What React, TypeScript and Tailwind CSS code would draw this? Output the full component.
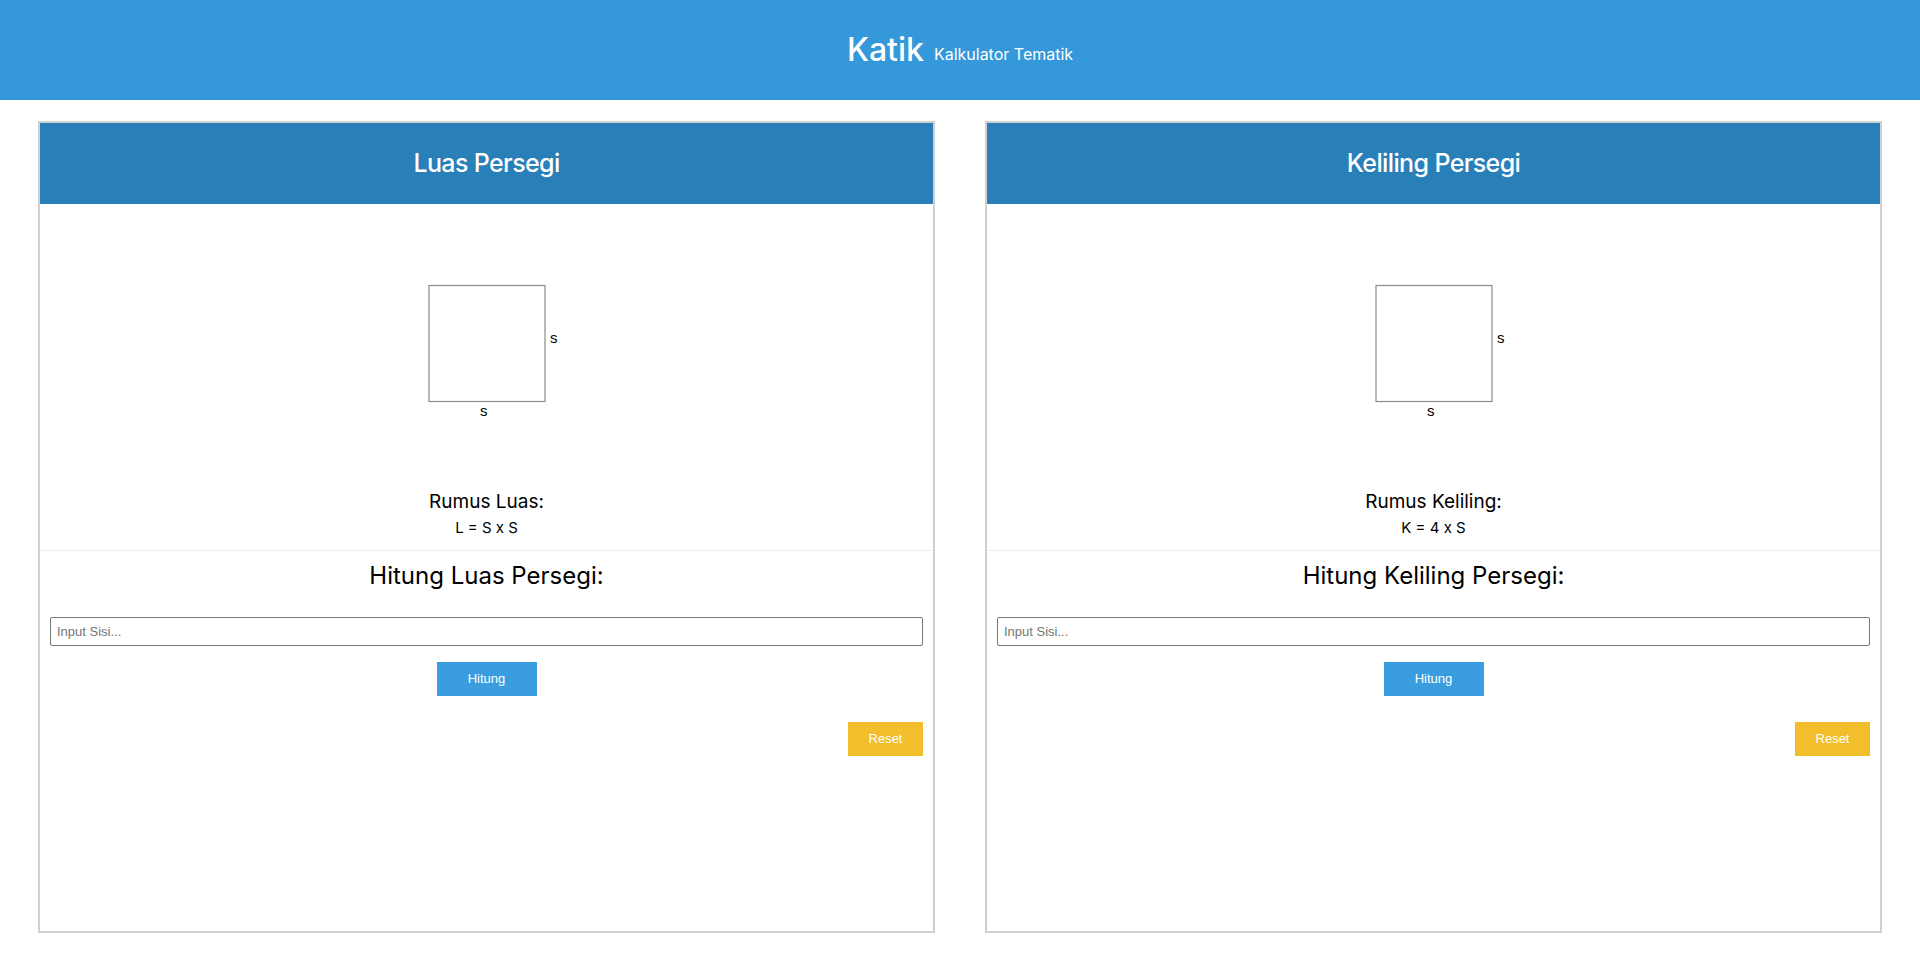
import React from "react";

type CardProps = {
  title: string;
  rumusLabel: string;
  rumus: string;
  hitungTitle: string;
};

function SquareFigure() {
  return (
    <svg width="150" height="138" viewBox="0 0 150 138" className="block overflow-visible">
      <rect x="17" y="0.5" width="116" height="116" fill="#fff" stroke="#8a8a8a" strokeWidth="1.2" />
      <text x="138" y="58" fontFamily="'Liberation Sans', Arial, sans-serif" fontSize="15" fill="#000">
        s
      </text>
      <text x="68" y="131" fontFamily="'Liberation Sans', Arial, sans-serif" fontSize="15" fill="#000">
        s
      </text>
    </svg>
  );
}

function Card({ title, rumusLabel, rumus, hitungTitle }: CardProps) {
  return (
    <div className="flex-1 h-[812px] border-2 border-[#d0d0d0] flex flex-col">
      {/* Header */}
      <div className="h-[81px] bg-[#2980b9] flex items-center justify-center">
        <h2 className="text-white text-[25px] font-medium tracking-tight">{title}</h2>
      </div>

      {/* Figure + formula */}
      <div className="flex flex-col items-center pt-[81px] pb-[10px] border-b border-[#eeeeee]">
        <SquareFigure />
        <p className="mt-[65px] text-[19px] leading-[28px] text-black">{rumusLabel}</p>
        <p className="text-[15px] leading-[24px] text-black">{rumus}</p>
      </div>

      {/* Calculator */}
      <div className="flex flex-col px-[10px] pt-[9px]">
        <h3 className="text-center text-[24px] leading-[32px] text-black">{hitungTitle}</h3>
        <input
          type="text"
          placeholder="Input Sisi..."
          className="mt-[25px] h-[29px] w-full border border-[#767676] rounded-[2px] px-[6px] text-[13px] font-['Liberation_Sans',Arial,sans-serif] placeholder:text-[#757575] outline-none"
        />
        <button className="mt-[16px] self-center w-[100px] h-[34px] bg-[#3a9de0] text-white text-[13px] font-['Liberation_Sans',Arial,sans-serif]">
          Hitung
        </button>
        <button className="mt-[26px] self-end w-[75px] h-[34px] bg-[#f2be2c] text-white text-[13px] font-['Liberation_Sans',Arial,sans-serif]">
          Reset
        </button>
      </div>
    </div>
  );
}

export default function App() {
  return (
    <div className="min-h-screen bg-white font-['Inter','Open_Sans',sans-serif]">
      <header className="h-[100px] bg-[#3498db] flex items-center justify-center text-white">
        <h1 className="text-[32px] font-medium leading-none">Katik</h1>
        <span className="ml-[10px] mt-[8px] text-[16px]">Kalkulator Tematik</span>
      </header>

      <main className="flex gap-[50px] px-[38px] pt-[21px]">
        <Card
          title="Luas Persegi"
          rumusLabel="Rumus Luas:"
          rumus="L = S x S"
          hitungTitle="Hitung Luas Persegi:"
        />
        <Card
          title="Keliling Persegi"
          rumusLabel="Rumus Keliling:"
          rumus="K = 4 x S"
          hitungTitle="Hitung Keliling Persegi:"
        />
      </main>
    </div>
  );
}
